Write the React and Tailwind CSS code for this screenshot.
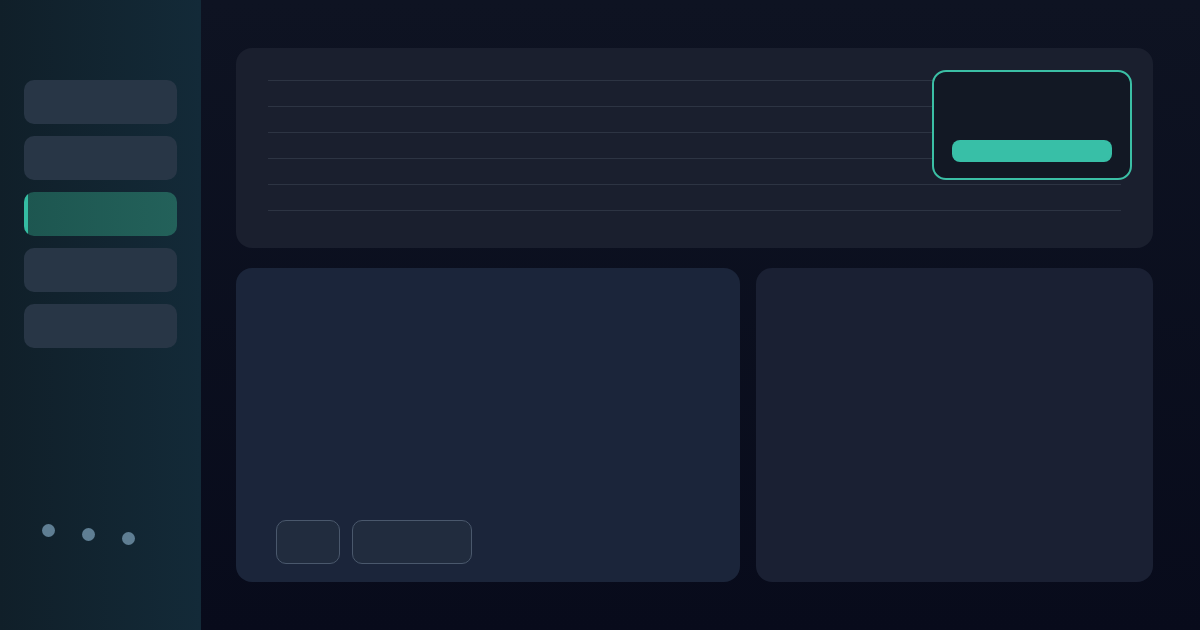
export default function App() {
  const lines = [0, 1, 2, 3, 4, 5];
  return (
    <div className="flex h-[630px] w-[1200px] overflow-hidden bg-gradient-to-b from-[#0e1322] to-[#080b1b]" style={{ fontFamily: '"Liberation Sans", sans-serif' }}>
      <aside className="flex w-[201px] shrink-0 flex-col justify-between bg-gradient-to-r from-[#101f29] to-[#132a38] pb-[85px] pl-6 pr-6 pt-20">
        <div className="flex flex-col gap-3">
          <div className="h-11 w-[153px] rounded-[10px] bg-[#283646]" />
          <div className="h-11 w-[153px] rounded-[10px] bg-[#283646]" />
          <div className="flex h-11 w-[153px] overflow-hidden rounded-[10px] bg-gradient-to-r from-[#1d5650] to-[#23615a]">
            <div className="w-1 rounded-[2px] bg-[#35bca2]" />
          </div>
          <div className="h-11 w-[153px] rounded-[10px] bg-[#283646]" />
          <div className="h-11 w-[153px] rounded-[10px] bg-[#283646]" />
        </div>
        <div className="flex items-start gap-[27px] pl-[18px]">
          <div className="h-[13px] w-[13px] rounded-full bg-[#5f7e93]" />
          <div className="mt-1 h-[13px] w-[13px] rounded-full bg-[#5f7e93]" />
          <div className="mt-2 h-[13px] w-[13px] rounded-full bg-[#5f7e93]" />
        </div>
      </aside>
      <main className="flex flex-1 flex-col gap-5 pb-12 pl-[35px] pr-[47px] pt-12">
        <section className="relative h-[200px] shrink-0 rounded-2xl bg-[#1a1f2e] px-8 pt-8">
          <div className="flex flex-col">
            {lines.map((i) => (
              <div key={i} className={`h-px bg-[#2d3443] ${i === 0 ? '' : 'mt-[25px]'}`} />
            ))}
          </div>
          <div className="absolute right-[21px] top-[22px] flex h-[110px] w-[200px] flex-col justify-end rounded-[14px] border-2 border-[#3bbfa5] bg-[#121824] px-[18px] pb-[16px]">
            <div className="h-[22px] rounded-lg bg-[#38bfa7]" />
          </div>
        </section>
        <div className="flex flex-1 gap-4">
          <section className="flex w-[504px] flex-col justify-end rounded-2xl bg-[#1b253a] px-10 pb-[18px]">
            <div className="flex gap-3">
              <div className="h-11 w-[64px] rounded-[10px] border border-[#4a586c] bg-[#212c3e]" />
              <div className="h-11 w-[120px] rounded-[10px] border border-[#4a586c] bg-[#212c3e]" />
            </div>
          </section>
          <section className="flex-1 rounded-2xl bg-[#1a2033]" />
        </div>
      </main>
    </div>
  );
}
